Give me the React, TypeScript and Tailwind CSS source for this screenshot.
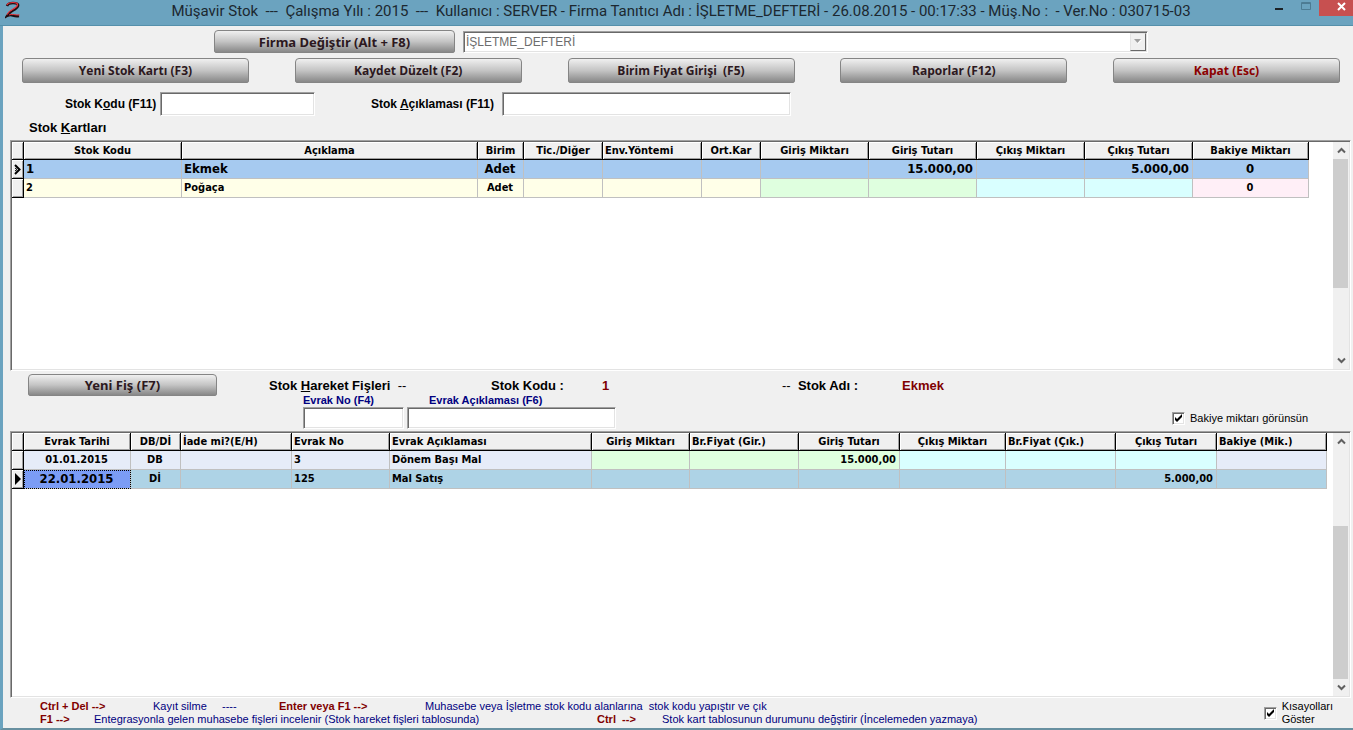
import React, { useState } from "react";
import clsx from "clsx";

type Align = "left" | "center" | "right";

interface Column {
  title: string;
  width: string;
  headAlign: Align;
  align: Align;
  tint: string;
}

interface GridProps {
  label: string;
  columns: Column[];
  rows: string[][];
  current: number;
  currentTint: string;
  marker: React.ReactNode;
  largeCells: number[];
  focusedCell?: number;
  thumb: string;
  className: string;
}

const sunken =
  "border border-t-[#a0a0a0] border-l-[#a0a0a0] border-b-white border-r-white bg-white shadow-[inset_1px_1px_#696969,inset_-1px_-1px_#e3e3e3]";

const alignClass: Record<Align, string> = {
  left: "text-left",
  center: "text-center",
  right: "text-right",
};

const stockColumns: Column[] = [
  { title: "Stok Kodu", width: "w-[158px]", headAlign: "center", align: "left", tint: "bg-[#ffffe8]" },
  { title: "Açıklama", width: "w-[296px]", headAlign: "center", align: "left", tint: "bg-[#ffffe8]" },
  { title: "Birim", width: "w-[46px]", headAlign: "center", align: "center", tint: "bg-[#ffffe8]" },
  { title: "Tic./Diğer", width: "w-[79px]", headAlign: "center", align: "center", tint: "bg-[#ffffe8]" },
  { title: "Env.Yöntemi", width: "w-[99px]", headAlign: "left", align: "left", tint: "bg-[#ffffe8]" },
  { title: "Ort.Kar", width: "w-[59px]", headAlign: "center", align: "center", tint: "bg-[#ffffe8]" },
  { title: "Giriş Miktarı", width: "w-[108px]", headAlign: "center", align: "right", tint: "bg-[#dfffdf]" },
  { title: "Giriş Tutarı", width: "w-[108px]", headAlign: "center", align: "right", tint: "bg-[#dfffdf]" },
  { title: "Çıkış Miktarı", width: "w-[108px]", headAlign: "center", align: "right", tint: "bg-[#d9ffff]" },
  { title: "Çıkış Tutarı", width: "w-[108px]", headAlign: "center", align: "right", tint: "bg-[#d9ffff]" },
  { title: "Bakiye Miktarı", width: "w-[116px]", headAlign: "center", align: "center", tint: "bg-[#ffeff7]" },
];

const stockRows = [
  ["1", "Ekmek", "Adet", "", "", "", "", "15.000,00", "", "5.000,00", "0"],
  ["2", "Poğaça", "Adet", "", "", "", "", "", "", "", "0"],
];

const slipColumns: Column[] = [
  { title: "Evrak Tarihi", width: "w-[107px]", headAlign: "center", align: "center", tint: "bg-[#e6ecf8]" },
  { title: "DB/Dİ", width: "w-[50px]", headAlign: "center", align: "center", tint: "bg-[#e6ecf8]" },
  { title: "İade mi?(E/H)", width: "w-[111px]", headAlign: "left", align: "left", tint: "bg-[#e6ecf8]" },
  { title: "Evrak No", width: "w-[98px]", headAlign: "left", align: "left", tint: "bg-[#e6ecf8]" },
  { title: "Evrak Açıklaması", width: "w-[202px]", headAlign: "left", align: "left", tint: "bg-[#e6ecf8]" },
  { title: "Giriş Miktarı", width: "w-[98px]", headAlign: "center", align: "right", tint: "bg-[#dfffdf]" },
  { title: "Br.Fiyat (Gir.)", width: "w-[109px]", headAlign: "left", align: "right", tint: "bg-[#dfffdf]" },
  { title: "Giriş Tutarı", width: "w-[101px]", headAlign: "center", align: "right", tint: "bg-[#dfffdf]" },
  { title: "Çıkış Miktarı", width: "w-[106px]", headAlign: "center", align: "right", tint: "bg-[#d9ffff]" },
  { title: "Br.Fiyat (Çık.)", width: "w-[110px]", headAlign: "left", align: "right", tint: "bg-[#d9ffff]" },
  { title: "Çıkış Tutarı", width: "w-[101px]", headAlign: "center", align: "right", tint: "bg-[#d9ffff]" },
  { title: "Bakiye (Mik.)", width: "w-[110px]", headAlign: "left", align: "right", tint: "bg-[#e6ecf8]" },
];

const slipRows = [
  ["01.01.2015", "DB", "", "3", "Dönem Başı Mal", "", "", "15.000,00", "", "", "", ""],
  ["22.01.2015", "Dİ", "", "125", "Mal Satış", "", "", "", "", "", "5.000,00", ""],
];

function ArrowIcon({ up }: { up?: boolean }) {
  return (
    <svg width="9" height="7" viewBox="0 0 9 7" fill="none" stroke="#606060" strokeWidth="2">
      <path d={up ? "M1 5.5 4.5 2 8 5.5" : "M1 1.5 4.5 5 8 1.5"} />
    </svg>
  );
}

function Scrollbar({ thumb }: { thumb: string }) {
  return (
    <div className="flex w-4 shrink-0 flex-col bg-[#f0f0f0]">
      <button type="button" aria-label="Yukarı kaydır" className="flex h-[17px] items-center justify-center">
        <ArrowIcon up />
      </button>
      <div className="flex flex-1 flex-col">
        <div className={clsx("w-[15px] bg-[#cdcdcd]", thumb)} />
      </div>
      <button type="button" aria-label="Aşağı kaydır" className="flex h-[17px] items-center justify-center">
        <ArrowIcon />
      </button>
    </div>
  );
}

function DataGrid({
  label,
  columns,
  rows,
  current,
  currentTint,
  marker,
  largeCells,
  focusedCell,
  thumb,
  className,
}: GridProps) {
  const raised = "bg-[#f0f0f0] shadow-[inset_1px_1px_#ffffff,inset_-1px_-1px_#a0a0a0]";

  const cellTint = (r: number, c: number) => {
    if (r !== current) return columns[c].tint;
    if (c === focusedCell) return "bg-[#7b9cf5] outline-1 -outline-offset-1 outline-dotted outline-black";
    return currentTint;
  };

  return (
    <div className={clsx("flex p-px", sunken, className)}>
      <div className="min-w-0 flex-1 overflow-hidden">
        <table
          aria-label={label}
          className="w-px table-fixed border-separate border-spacing-0 font-['DejaVu_Sans_Condensed','DejaVu_Sans',sans-serif] text-[11px] leading-4 font-bold text-black"
        >
          <colgroup>
            <col className="w-3" />
            {columns.map((col) => (
              <col key={col.title} className={col.width} />
            ))}
          </colgroup>
          <thead>
            <tr className="h-[18px]">
              <th className={clsx("border-r border-b border-black p-0", raised)} />
              {columns.map((col) => (
                <th
                  key={col.title}
                  scope="col"
                  className={clsx(
                    "border-r border-b border-black px-0.5 py-0 whitespace-nowrap",
                    raised,
                    alignClass[col.headAlign],
                  )}
                >
                  {col.title}
                </th>
              ))}
            </tr>
          </thead>
          <tbody>
            {rows.map((row, r) => (
              <tr key={row[0]} className="h-[19px]">
                <td className={clsx("border-r border-b border-black p-0", raised)}>
                  {r === current && marker}
                </td>
                {row.map((value, c) => (
                  <td
                    key={columns[c].title}
                    className={clsx(
                      "border-r border-b border-[#c0c0c0] py-0 pr-[3px] pl-0.5 whitespace-nowrap",
                      alignClass[columns[c].align],
                      cellTint(r, c),
                      r === current && largeCells.includes(c) && "text-[13px]",
                    )}
                  >
                    {value}
                  </td>
                ))}
              </tr>
            ))}
          </tbody>
        </table>
      </div>
      <Scrollbar thumb={thumb} />
    </div>
  );
}

function GlossButton({ children, className }: { children: React.ReactNode; className: string }) {
  return (
    <button
      type="button"
      className={clsx(
        "rounded-t-[4px] rounded-b-[2px] border border-[#858585] bg-linear-to-b from-[#f0f0f0] via-[#c4c4c4] to-[#888888] whitespace-pre",
        className,
      )}
    >
      {children}
    </button>
  );
}

function CheckBox({ label, className }: { label: string; className?: string }) {
  const [checked, setChecked] = useState(true);

  return (
    <label className={clsx("flex items-center gap-[5px] text-[11px] leading-[13px] text-black", className)}>
      <span className="relative size-[13px] shrink-0">
        <input
          type="checkbox"
          checked={checked}
          onChange={(e) => setChecked(e.target.checked)}
          className={clsx("block size-[13px] appearance-none", sunken)}
        />
        {checked && (
          <svg className="pointer-events-none absolute inset-0" width="13" height="13" viewBox="0 0 13 13">
            <path d="M3 5v3l2 2 5-5V2L5 7z" fill="#000" />
          </svg>
        )}
      </span>
      {label}
    </label>
  );
}

function TitleBar() {
  return (
    <header className="flex h-[26px] items-start border-b border-[#5590ab] bg-[#6ba3bf]">
      <svg className="mt-px ml-[5px] shrink-0" width="18" height="18" viewBox="0 0 18 18" fill="none">
        <path d="M2 5q1-3 6-3 6 0 5 3-.5 2-5 4.500-4 2-6 5.500 3-1.500 6-.5t6 .5" stroke="#200c10" strokeWidth="2.500" />
        <path d="M2 4q1-2.500 6-2.500 5 0 4.500 2.500-.5 2-5 4.500-4 2-5.500 5" stroke="#e8343c" strokeWidth="1.200" />
        <path d="M4 14q2-1 4.500-.5t6 .5" stroke="#e8343c" />
      </svg>
      <h1 className="min-w-0 flex-1 overflow-hidden pl-[76px] text-center font-['Roboto',sans-serif] text-[15px] leading-[22px] whitespace-pre text-[#1c2830]">
        {"Müşavir Stok  ---  Çalışma Yılı : 2015  ---  Kullanıcı : SERVER - Firma Tanıtıcı Adı : İŞLETME_DEFTERİ - 26.08.2015 - 00:17:33 - Müş.No :  - Ver.No : 030715-03"}
      </h1>
      <div className="flex h-4 shrink-0">
        <button type="button" aria-label="Simge durumuna küçült" className="w-7">
          <svg width="28" height="16" viewBox="0 0 28 16">
            <path d="M12 8h8v2h-8z" fill="#1c2226" />
          </svg>
        </button>
        <button type="button" aria-label="Ekranı kapla" className="w-7">
          <svg width="28" height="16" viewBox="0 0 28 16" fill="none">
            <path d="M10.500 2.500h9v7h-9zM10.500 3.500h9" stroke="#4d7c94" />
          </svg>
        </button>
        <button type="button" aria-label="Kapat" className="w-[34px] bg-[#c75050]">
          <svg width="34" height="16" viewBox="0 0 34 16" stroke="#fff" strokeWidth="2">
            <path d="m19 3 7 7m0-7-7 7" />
          </svg>
        </button>
      </div>
    </header>
  );
}

export default function App() {
  return (
    <div className="flex min-h-screen flex-col bg-[#f0f0f0] font-['Liberation_Sans',Arial,sans-serif]">
      <TitleBar />

      <main className="flex flex-1 flex-col border-b-2 border-l-[3px] border-b-[#6890a0] border-l-[#6ba3bf]">
        <div className="flex items-center gap-2 pt-1 pr-[205px] pl-[211px]">
          <GlossButton className="h-[23px] w-[241px] shrink-0 font-['Noto_Sans',sans-serif] text-[13px] leading-5 font-bold text-[#2c1820]">
            Firma Değiştir (Alt + F8)
          </GlossButton>
          <div className="relative flex-1">
            <select
              disabled
              aria-label="Firma"
              className={clsx("block h-[22px] w-full appearance-none px-0.5 text-[12px] text-[#6d6d6d] opacity-100", sunken)}
            >
              <option>İŞLETME_DEFTERİ</option>
            </select>
            <span className="pointer-events-none absolute top-0.5 right-0.5 flex h-[18px] w-4 items-center justify-center border border-t-[#e3e3e3] border-l-[#e3e3e3] border-r-[#696969] border-b-[#696969] bg-[#f0f0f0]">
              <svg width="8" height="5" viewBox="0 0 8 5">
                <path d="M1 1h7L4 5z" fill="#fff" />
                <path d="M0 0h7L3.500 4z" fill="#a0a0a0" />
              </svg>
            </span>
          </div>
        </div>

        <nav className="mt-[5px] flex justify-between pr-[13px] pl-[19px] font-['Open_Sans',sans-serif] text-[12px] leading-5 font-bold text-[#2c1820]">
          {["Yeni Stok Kartı (F3)", "Kaydet Düzelt (F2)", "Birim Fiyat Girişi  (F5)", "Raporlar (F12)"].map((text) => (
            <GlossButton key={text} className="h-[25px] w-[227px]">
              {text}
            </GlossButton>
          ))}
          <GlossButton className="h-[25px] w-[227px] text-[#8b0000]">Kapat (Esc)</GlossButton>
        </nav>

        <div className="mt-[9px] flex items-center pl-[62px] text-[12px] font-bold text-black">
          <label htmlFor="stok-kodu" className="w-[95px]">
            Stok K<u>o</u>du (F11)
          </label>
          <input id="stok-kodu" className={clsx("h-6 w-[155px] px-1", sunken)} />
          <label htmlFor="stok-aciklamasi" className="ml-14 w-[131px]">
            Stok <u>A</u>çıklaması (F11)
          </label>
          <input id="stok-aciklamasi" className={clsx("h-6 w-[289px] px-1", sunken)} />
        </div>

        <h2 className="mt-0.5 pb-0.5 pl-[26px] text-[13px] leading-5 font-bold text-black">
          Stok <u>K</u>artları
        </h2>

        <DataGrid
          label="Stok Kartları"
          columns={stockColumns}
          rows={stockRows}
          current={0}
          currentTint="bg-[#a6caf0]"
          marker={
            <svg className="mx-auto block" width="8" height="11" viewBox="0 0 8 11" fill="none" stroke="#000">
              <path d="m1 1 4.500 4.500L1 10" strokeWidth="2" />
              <path d="m1 4 2 1.500L1 7" />
            </svg>
          }
          largeCells={[0, 1, 2, 7, 9, 10]}
          thumb="h-[129px]"
          className="mr-[2px] ml-[7px] grow basis-[230px]"
        />

        <section className="flex items-start pt-[3px] pl-[25px] text-black">
          <GlossButton className="h-[22px] w-[189px] shrink-0 font-['Noto_Sans',sans-serif] text-[13px] leading-5 font-bold text-[#2c1820]">
            Yeni Fiş (F7)
          </GlossButton>
          <div className="ml-[52px] flex-1">
            <div className="flex items-baseline pt-1 text-[13px] leading-4 font-bold">
              <h2 className="w-[222px] whitespace-pre">
                Stok <u>H</u>areket Fişleri{"  "}
                <span className="font-normal">--</span>
              </h2>
              <span className="w-[111px]">Stok Kodu :</span>
              <span className="w-[180px] text-[#800000]">1</span>
              <span className="w-[120px] whitespace-pre">
                <span className="font-normal">--</span>
                {"  "}Stok Adı :
              </span>
              <span className="text-[#800000]">Ekmek</span>
            </div>
            <div className="flex items-end pb-0.5 pl-[34px]">
              <div className="flex flex-col">
                <label htmlFor="evrak-no" className="text-[11px] leading-[13px] font-bold text-[#000080]">
                  Evrak No (F4)
                </label>
                <input id="evrak-no" className={clsx("h-[22px] w-[101px] px-1 text-[12px]", sunken)} />
              </div>
              <div className="ml-[3px] flex flex-col">
                <label htmlFor="evrak-aciklamasi" className="pl-[22px] text-[11px] leading-[13px] font-bold text-[#000080]">
                  Evrak Açıklaması (F6)
                </label>
                <input id="evrak-aciklamasi" className={clsx("h-[22px] w-[209px] px-1 text-[12px]", sunken)} />
              </div>
              <CheckBox label="Bakiye miktarı görünsün" className="mr-[45px] mb-1 ml-auto" />
            </div>
          </div>
        </section>

        <DataGrid
          label="Stok Hareket Fişleri"
          columns={slipColumns}
          rows={slipRows}
          current={1}
          currentTint="bg-[#aed3e6]"
          marker={
            <svg className="mx-auto block" width="8" height="12" viewBox="0 0 8 12">
              <path d="m1 0 6 6-6 6z" fill="#000" />
            </svg>
          }
          largeCells={[0]}
          focusedCell={0}
          thumb="mt-auto h-[153px]"
          className="mr-[2px] ml-[7px] grow basis-[266px]"
        />

        <footer className="flex items-center justify-between py-0.5 pr-5 pl-[37px] text-[11px] leading-[13px] whitespace-pre text-[#000080]">
          <div>
            <p className="flex">
              <b className="w-[113px] text-[#800000]">{"Ctrl + Del -->"}</b>
              <span className="w-[69px]">Kayıt silme</span>
              <span className="w-[57px]">----</span>
              <b className="w-[146px] text-[#800000]">{"Enter veya F1 -->"}</b>
              <span>{"Muhasebe veya İşletme stok kodu alanlarına  stok kodu yapıştır ve çık"}</span>
            </p>
            <p className="flex">
              <b className="w-[54px] text-[#800000]">{"F1 -->"}</b>
              <span className="w-[503px]">
                Entegrasyonla gelen muhasebe fişleri incelenir (Stok hareket fişleri tablosunda)
              </span>
              <b className="w-[65px] text-[#800000]">{"Ctrl  -->"}</b>
              <span>Stok kart tablosunun durumunu değştirir (İncelemeden yazmaya)</span>
            </p>
          </div>
          <CheckBox label={"Kısayolları\nGöster"} />
        </footer>
      </main>
    </div>
  );
}
